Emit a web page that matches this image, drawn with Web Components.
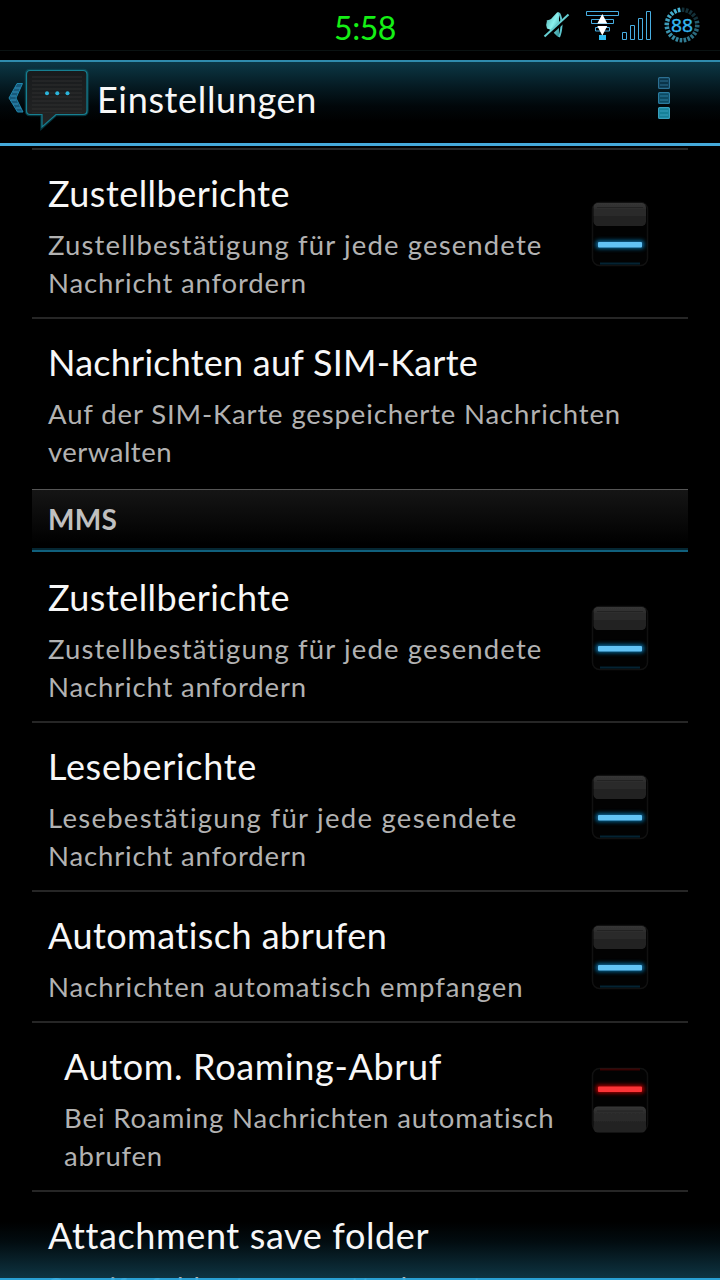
<!DOCTYPE html>
<html lang="de">
<head>
<meta charset="utf-8">
<title>Einstellungen</title>
<style>
    html, body { margin: 0; height: 100%; background: #000; }
    body { font-family: Lato, "Open Sans", sans-serif; color: #f7f7f7; overflow: hidden; }
</style>
</head>
<body>
<settings-screen>
    <status-bar slot="top"><fit-line width="62">5:58</fit-line></status-bar>
    <action-bar slot="top"><fit-line width="220">Einstellungen</fit-line></action-bar>

    <pref-row state="on">
        <fit-line slot="heading" width="242">Zustellberichte</fit-line>
        <fit-line slot="summary" width="495">Zustellbestätigung für jede gesendete</fit-line>
        <fit-line slot="summary" width="259">Nachricht anfordern</fit-line>
    </pref-row>
    <pref-row last>
        <fit-line slot="heading" width="430">Nachrichten auf SIM-Karte</fit-line>
        <fit-line slot="summary" width="573">Auf der SIM-Karte gespeicherte Nachrichten</fit-line>
        <fit-line slot="summary" width="124">verwalten</fit-line>
    </pref-row>
    <pref-section><fit-line width="69">MMS</fit-line></pref-section>
    <pref-row state="on">
        <fit-line slot="heading" width="242">Zustellberichte</fit-line>
        <fit-line slot="summary" width="495">Zustellbestätigung für jede gesendete</fit-line>
        <fit-line slot="summary" width="259">Nachricht anfordern</fit-line>
    </pref-row>
    <pref-row state="on">
        <fit-line slot="heading" width="209">Leseberichte</fit-line>
        <fit-line slot="summary" width="470">Lesebestätigung für jede gesendete</fit-line>
        <fit-line slot="summary" width="259">Nachricht anfordern</fit-line>
    </pref-row>
    <pref-row state="on">
        <fit-line slot="heading" width="340">Automatisch abrufen</fit-line>
        <fit-line slot="summary" width="476">Nachrichten automatisch empfangen</fit-line>
    </pref-row>
    <pref-row state="off" indent>
        <fit-line slot="heading" width="378">Autom. Roaming-Abruf</fit-line>
        <fit-line slot="summary" width="491">Bei Roaming Nachrichten automatisch</fit-line>
        <fit-line slot="summary" width="99">abrufen</fit-line>
    </pref-row>
    <pref-row>
        <fit-line slot="heading" width="380">Attachment save folder</fit-line>
        <fit-line slot="summary" width="447">Specify folder to save attachments</fit-line>
    </pref-row>
</settings-screen>

<script>
class SettingsScreen extends HTMLElement {
    constructor() {
        super();
        this.attachShadow({ mode: 'open' });
        this.shadowRoot.innerHTML = `
            <style>
                :host {
                    position: relative;
                    display: flex;
                    flex-direction: column;
                    width: 720px;
                    height: 1280px;
                    overflow: hidden;
                    background: linear-gradient(#000 1222px, #020c10 1242px, #0e3442 1278px);
                }
                .list {
                    flex: 1;
                    min-height: 0;
                    overflow: hidden;
                    padding: 0 32px;
                }
                .first { height: 2px; margin-top: 2px; background: #262626; }
                /* lies over the last, cut off row */
                .edge {
                    position: absolute;
                    left: 0;
                    right: 0;
                    bottom: 0;
                    height: 2px;
                    background: rgba(44, 172, 228, .9);
                }
            </style>
            <slot name="top"></slot>
            <div class="list"><div class="first"></div><slot></slot></div>
            <div class="edge"></div>
        `;
    }
}

class StatusBar extends HTMLElement {
    constructor() {
        super();
        this.attachShadow({ mode: 'open' });
    }
    connectedCallback() {
        this.render();
    }
    render() {
        // ring of the battery gauge, faint in the part that is used up
        let ticks = '';
        for (let i = 0; i < 24; i++) {
            const used = i < 5;
            ticks += `<path d="M0-17.500V-13" transform="rotate(${i * 15 + 4})" opacity="${used ? 0.25 : 0.35 + i * 0.026}"/>`;
        }
        this.shadowRoot.innerHTML = `
            <style>
                :host {
                    display: grid;
                    grid-template-columns: 1fr auto 1fr;
                    height: 51px;
                    flex: none;
                    box-sizing: border-box;
                    border-bottom: 1px solid #0a1212;
                    margin-bottom: 9px;
                    font-size: 32px;
                    line-height: 55px;
                    color: #15f015;
                }
                .clock { grid-column: 2; padding-left: 10px; }
                svg { justify-self: end; display: block; }
            </style>
            <div class="clock"><slot></slot></div>
            <svg width="190" height="50" viewBox="530 0 190 50" fill="none">
                <defs>
                    <linearGradient id="m" x1="0" y1="0" x2="1" y2="1">
                        <stop offset="0" stop-color="#4aa8a8"/><stop offset=".5" stop-color="#8af0ee"/><stop offset="1" stop-color="#2a8890"/>
                    </linearGradient>
                </defs>
                <path d="M546 20q3 .5 5-1l6-6.500q2-1.500 2 1V36q0 2-2 0l-5-5q-2-2-5-2.500-1.500-4 0-8z" fill="url(#m)"/>
                <path d="M559 13q3 5 2.500 12.500T559 37" stroke="#5cc4cc" stroke-width="2"/>
                <path d="M544.500 38.500L569 16" stroke="#000" stroke-width="4"/>
                <path d="M544.500 36.500L568.500 14.500" stroke="#66cfd3" stroke-width="2"/>
                <g stroke="#48aee2">
                    <path d="M586.500 11.500h32v4h-32zM591.500 19.500h22v4h-22zM595.500 27.500h14v3.500h-14z"/>
                    <path d="M622.500 32.500h4v7h-4zM630.500 25.500h4v14h-4zM638.500 18.500h4v21h-4zM646.500 11.500h4v28h-4z"/>
                </g>
                <path d="M599 35h7v5h-7z" fill="#30bdf2"/>
                <path d="M602.300 14l5 9.500h-10zM602.300 35.500l5-9.500h-10z" fill="#fff"/>
                <g transform="translate(682 25)" stroke="#4cc0e4" stroke-width="2.600">${ticks}</g>
                <text x="671" y="32" textLength="22" lengthAdjust="spacingAndGlyphs" font-family="Open Sans" font-size="19" fill="#35b8f0" stroke="#35b8f0" stroke-width=".4">88</text>
            </svg>
        `;
    }
}

class ActionBar extends HTMLElement {
    constructor() {
        super();
        this.attachShadow({ mode: 'open' });
        this.shadowRoot.innerHTML = `
            <style>
                :host {
                    display: flex;
                    flex: none;
                    box-sizing: border-box;
                    height: 86px;
                    border-top: 2px solid #2f8cae;
                    border-bottom: 3px solid #45a9da;
                    background: linear-gradient(#0c3846, #051b23 24px, #01070a 44px, #000 60px);
                    font-size: 36px;
                    line-height: 75px;
                }
                .title { flex: 1; padding-left: 1px; }
                svg { display: block; flex: none; }
            </style>
            <svg width="96" height="80" viewBox="0 62 96 80" fill="none">
                <defs>
                    <linearGradient id="b" x2="0" y2="1"><stop stop-color="#181b1d"/><stop offset="1" stop-color="#242424"/></linearGradient>
                    <pattern id="l" width="4" height="4" patternUnits="userSpaceOnUse"><path d="M0 1h4" stroke="#343434"/></pattern>
                </defs>
                <path d="M17 83.500h5.500l-6.500 14.500 7 14h-5.500l-8.500-14z" fill="#175a7c" stroke="#2088ae"/>
                <path d="M15 88h5M13 92h5M11 96h5M11 100h5M13 104h5M16 108h5" stroke="#348fb8"/>
                <path d="M30 70.500h53q4 0 4 4v36q0 4-4 4H56L42 127v-12.500H30q-3.500 0-3.500-4v-36q0-4 3.500-4z" stroke="#0a5562" stroke-width="3.500" opacity=".6"/>
                <path d="M30 70.500h53q4 0 4 4v36q0 4-4 4H56L42 127v-12.500H30q-3.500 0-3.500-4v-36q0-4 3.500-4z" fill="url(#b)"/>
                <path d="M32 76h50v37H32z" fill="url(#l)" opacity=".7"/>
                <path d="M30 70.500h53q4 0 4 4v36q0 4-4 4H56L42 127v-12.500H30q-3.500 0-3.500-4v-36q0-4 3.500-4z" stroke="#177f91" stroke-width="1.200"/>
                <g fill="#2bb5dc"><circle cx="47" cy="93.300" r="2"/><circle cx="57.300" cy="93.300" r="2"/><circle cx="67.500" cy="93.300" r="2"/></g>
            </svg>
            <div class="title"><slot></slot></div>
            <svg width="70" height="80" viewBox="650 62 70 80" stroke-width="1.200">
                <g stroke="#2c6f92"><rect x="658.600" y="77.600" width="10.800" height="10.800" rx="1" fill="#0a3449"/><path d="M660 81h8M660 85h8"/></g>
                <g stroke="#2b7ca0"><rect x="658.600" y="92.600" width="10.800" height="10.800" rx="1" fill="#0c4a62"/><path d="M660 96h8M660 100h8"/></g>
                <g stroke="#38a0be"><rect x="658.600" y="107.600" width="10.800" height="10.800" rx="1" fill="#168199"/><path d="M660 111h8M660 115h8"/></g>
            </svg>
        `;
    }
}

class PrefSection extends HTMLElement {
    constructor() {
        super();
        this.attachShadow({ mode: 'open' });
        this.shadowRoot.innerHTML = `
            <style>
                :host {
                    display: block;
                    box-sizing: border-box;
                    height: 63px;
                    margin: 1px 0 2px;
                    padding-left: 16px;
                    border-top: 1px solid #555;
                    background: linear-gradient(#151515, #000 54px);
                    box-shadow: inset 0 -2px #10607d, inset 0 -4px #052733;
                    font-size: 28px;
                    font-weight: 700;
                    line-height: 58px;
                    color: #c0c0c0;
                }
            </style>
            <slot></slot>
        `;
    }
}

class PrefSwitch extends HTMLElement {
    constructor() {
        super();
        this.attachShadow({ mode: 'open' });
    }
    connectedCallback() {
        this.render();
    }
    render() {
        const on = this.getAttribute('state') === 'on';
        const color = on ? '#62c3f5' : '#fa3437';
        const glow = on ? '#0784c4' : '#d00000';
        const frameY = on ? 8.5 : 1.5;
        const thumbY = on ? 9 : 39.5;
        const thumbH = on ? 23 : 26;
        const lineY = on ? 48 : 19.5;
        const edgeY = on ? 69.5 : 2.5;
        this.shadowRoot.innerHTML = `
            <style>
                :host { display: block; flex: none; }
                svg { display: block; }
            </style>
            <svg width="64" height="80" viewBox="0 0 64 80" fill="none">
                <defs>
                    <linearGradient id="t" x2="0" y2="1">
                        <stop stop-color="#363636"/><stop offset=".3" stop-color="#2b2b2b"/>
                        <stop offset=".55" stop-color="#2a2a2a"/><stop offset=".6" stop-color="#202020"/><stop offset="1" stop-color="#242424"/>
                    </linearGradient>
                    <filter id="g" x="-20%" y="-200%" width="140%" height="500%"><feGaussianBlur stdDeviation="2"/></filter>
                    <filter id="s" x="-20%" y="-20%" width="140%" height="140%"><feGaussianBlur stdDeviation=".5"/></filter>
                </defs>
                <rect x="4.500" y="${frameY}" width="55" height="63" rx="7" fill="#020202" stroke="#111" stroke-width="1.500"/>
                <rect x="12" y="${edgeY - 1}" width="40" height="2" fill="${glow}" opacity=".25" filter="url(#s)"/>
                <rect x="5.500" y="${thumbY}" width="52.500" height="${thumbH}" rx="4.500" fill="url(#t)" filter="url(#s)"/>
                <path d="M9 ${thumbY + 4.5}h46" stroke="#222"/>
                <rect x="8" y="${lineY - 1.5}" width="48" height="8" rx="2" fill="${glow}" filter="url(#g)" opacity=".85"/>
                <rect x="10" y="${lineY}" width="44" height="5.500" rx="1" fill="${color}"/>
            </svg>
        `;
    }
}

class PrefRow extends HTMLElement {
    constructor() {
        super();
        this.attachShadow({ mode: 'open' });
    }
    connectedCallback() {
        this.render();
    }
    render() {
        const state = this.getAttribute('state');
        this.shadowRoot.innerHTML = `
            <style>
                :host {
                    display: flex;
                    align-items: center;
                    box-sizing: border-box;
                    padding: 18px 36px 0 16px;
                    border-bottom: 2px solid #262626;
                }
                :host([last]) { border-bottom-color: transparent; }
                :host([indent]) { padding-left: 32px; }
                .text {
                    flex: 1;
                    min-width: 0;
                    display: flex;
                    flex-direction: column;
                    align-items: flex-start;
                    padding-bottom: 15px;
                }
                ::slotted([slot="heading"]) { font-size: 36px; line-height: 50px; margin-bottom: 8px; }
                ::slotted([slot="summary"]) { font-size: 27.500px; line-height: 38px; color: #b2b2b2; }
                pref-switch { margin-top: -18px; margin-left: -16px; }
            </style>
            <div class="text">
                <slot name="heading"></slot>
                <slot name="summary"></slot>
            </div>
            ${state ? `<pref-switch state="${state}"></pref-switch>` : ''}
        `;
    }
}

// one line of text, tracked so that it fills the given width
class FitLine extends HTMLElement {
    constructor() {
        super();
        this.attachShadow({ mode: 'open' });
        this.shadowRoot.innerHTML = `
            <style>
                :host { display: inline-block; white-space: nowrap; }
            </style>
            <slot></slot>
        `;
    }
    connectedCallback() {
        const natural = this.getBoundingClientRect().width;
        const count = this.textContent.length;
        this.style.letterSpacing = (this.getAttribute('width') - natural) / count + 'px';
    }
}

customElements.define('settings-screen', SettingsScreen);
customElements.define('status-bar', StatusBar);
customElements.define('action-bar', ActionBar);
customElements.define('pref-section', PrefSection);
customElements.define('pref-switch', PrefSwitch);
customElements.define('pref-row', PrefRow);
customElements.define('fit-line', FitLine);
</script>
</body>
</html>
